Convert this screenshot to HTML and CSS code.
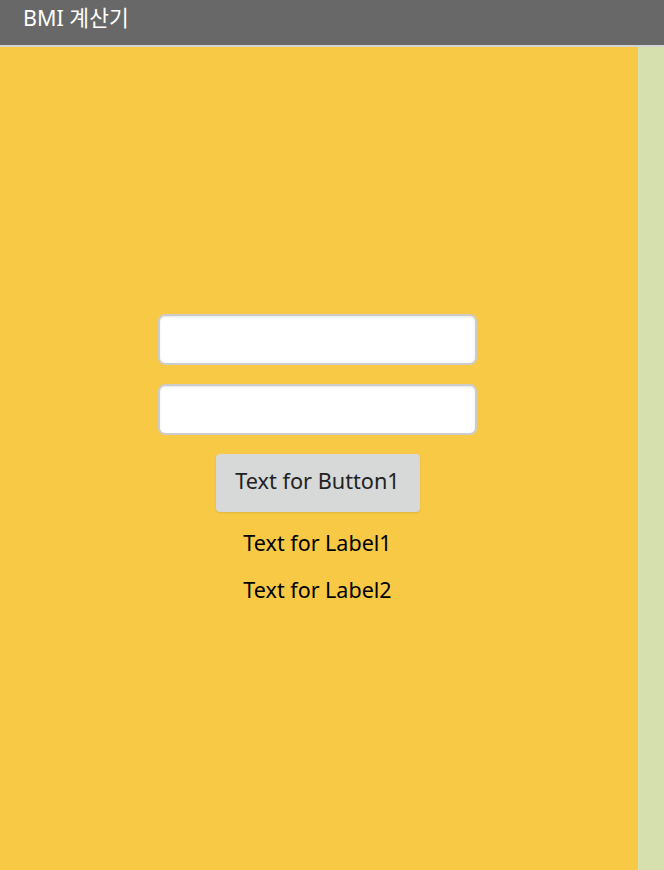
FILE: index.html
```html
<!DOCTYPE html>
<html lang="ko">
<head>
  <meta charset="UTF-8" />
  <title>BMI 계산기</title>
  <link rel="stylesheet" href="styles.css">
</head>
<body>
  <header class="titlebar">BMI 계산기</header>

  <div class="screen">
    <main class="form">
      <input type="text" class="textbox" />
      <input type="text" class="textbox" />
      <button class="button">Text for Button1</button>
      <div class="label">Text for Label1</div>
      <div class="label">Text for Label2</div>
    </main>
    <aside class="side"></aside>
  </div>
</body>
</html>
```

FILE: styles.css
```css
* {
  box-sizing: border-box;
}

html, body {
  height: 100%;
}

body {
  margin: 0;
  font-family: "Noto Sans", "Noto Sans CJK KR", sans-serif;
  display: flex;
  flex-direction: column;
  overflow: hidden;
}

.titlebar {
  height: 47px;
  padding: 3px 0 0 23px;
  background-color: #686868;
  border-bottom: 2px solid #d3d3d3;
  color: white;
  font-size: 21.5px;
  line-height: 30px;
}

.screen {
  flex: 1;
  display: flex;
}

.form {
  width: 638px;
  padding: 267px 3px 0 0;
  background-color: #f7c945;
  display: flex;
  flex-direction: column;
  align-items: center;
}

.side {
  flex: 1;
  background-color: #d5e0ae;
}

.textbox {
  width: 319px;
  height: 51px;
  margin-bottom: 19px;
  border: 2px solid #cccccc;
  border-radius: 7px;
  background-color: white;
  box-shadow: inset 0 1px 2px rgba(0, 0, 0, 0.1);
  font-size: 18px;
}

.button {
  width: 204px;
  height: 58px;
  padding: 0 0 6px;
  margin-bottom: 7px;
  border: none;
  border-radius: 4px;
  background-color: #d7d8d8;
  color: #222;
  font-family: inherit;
  font-size: 21.7px;
  box-shadow: 0 1px 2px rgba(0, 0, 0, 0.1);
}

.label {
  font-size: 21.5px;
  line-height: 47px;
  color: black;
}
```
